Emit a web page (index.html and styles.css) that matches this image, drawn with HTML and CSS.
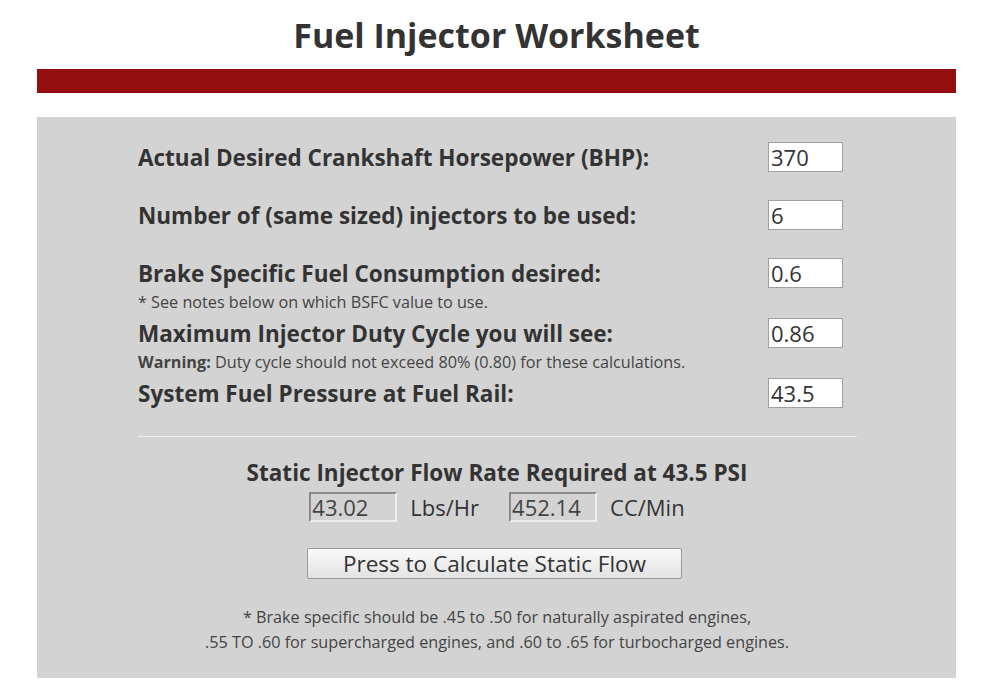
FILE: index.html
```html
<!DOCTYPE html>
<html>
<head>
<meta charset="utf-8">
<link rel="stylesheet" href="styles.css">
</head>
<body>
<div class="page">
  <h1 class="title">Fuel Injector Worksheet</h1>
  <div class="bar"></div>
  <div class="panel">
    <div class="form">
      <div class="row">
        <label class="label">Actual Desired Crankshaft Horsepower (BHP):</label>
        <input class="field" type="text" value="370">
      </div>
      <div class="row">
        <label class="label">Number of (same sized) injectors to be used:</label>
        <input class="field" type="text" value="6">
      </div>
      <div class="row row-noted">
        <label class="label">Brake Specific Fuel Consumption desired:</label>
        <input class="field" type="text" value="0.6">
      </div>
      <div class="note">* See notes below on which BSFC value to use.</div>
      <div class="row row-noted">
        <label class="label">Maximum Injector Duty Cycle you will see:</label>
        <input class="field" type="text" value="0.86">
      </div>
      <div class="note"><b>Warning:</b> Duty cycle should not exceed 80% (0.80) for these calculations.</div>
      <div class="row row-last">
        <label class="label">System Fuel Pressure at Fuel Rail:</label>
        <input class="field" type="text" value="43.5">
      </div>
      <hr class="divider">
      <div class="result">
        <div class="result-title">Static Injector Flow Rate Required at 43.5 PSI</div>
        <div class="outputs">
          <input class="out" type="text" value="43.02" readonly>
          <span class="unit">Lbs/Hr</span>
          <input class="out" type="text" value="452.14" readonly>
          <span class="unit">CC/Min</span>
        </div>
        <button class="calc" type="button">Press to Calculate Static Flow</button>
        <p class="foot">* Brake specific should be .45 to .50 for naturally aspirated engines,<br>.55 TO .60 for supercharged engines, and .60 to .65 for turbocharged engines.</p>
      </div>
    </div>
  </div>
</div>
</body>
</html>
```
FILE: styles.css
```css
html, body {
  margin: 0;
  padding: 0;
  background: #fff;
}
body {
  font-family: "Open Sans", "Noto Sans", sans-serif;
  color: #333;
}
.page {
  width: 919px;
  margin-left: 37px;
}
.title {
  margin: 0;
  padding-top: 12px;
  height: 69px;
  box-sizing: border-box;
  font-size: 34px;
  line-height: 46px;
  font-weight: 700;
  text-align: center;
  color: #333;
}
.bar {
  height: 24px;
  background: #930f0f;
}
.panel {
  margin-top: 24px;
  background: #d3d3d3;
  padding: 25px 0 23px;
}
.form {
  width: 719px;
  margin: 0 0 0 101px;
}
.row {
  display: flex;
  align-items: center;
  justify-content: space-between;
  height: 30px;
  padding-right: 14px;
  margin-bottom: 28px;
}
.row-noted {
  margin-bottom: 4px;
}
.row-last {
  margin-bottom: 0;
}
.label {
  font-size: 22.5px;
  font-weight: 700;
  color: #333;
  white-space: nowrap;
}
.field {
  width: 75px;
  height: 30px;
  box-sizing: border-box;
  border: 1px solid #a0a0a0;
  background: #fff;
  padding: 0 2px;
  font-family: "Open Sans", sans-serif;
  font-size: 22px;
  color: #333;
  outline: none;
}
.note {
  font-size: 16.2px;
  line-height: 20px;
  height: 26px;
  color: #444;
  white-space: nowrap;
}
.divider {
  border: 0;
  border-top: 1px solid #ececec;
  margin: 28px 0 0;
}
.result {
  text-align: center;
  padding-right: 1px;
}
.result-title {
  margin-top: 22px;
  font-size: 22.5px;
  line-height: 28px;
  font-weight: 700;
}
.outputs {
  display: flex;
  justify-content: center;
  align-items: center;
  margin-top: 5px;
  height: 30px;
}
.out {
  width: 88px;
  height: 30px;
  box-sizing: border-box;
  border-width: 2px;
  border-style: solid;
  border-top-color: #8a8a8a;
  border-left-color: #8a8a8a;
  border-right-color: #eeeeee;
  border-bottom-color: #eeeeee;
  background: #d3d3d3;
  padding: 0 1px;
  font-family: "Open Sans", sans-serif;
  font-size: 22px;
  color: #444;
  outline: none;
}
.unit {
  font-size: 22px;
  margin: 0 30px 0 13px;
  color: #333;
}
.unit:last-child {
  margin-right: 0;
}
.calc {
  display: block;
  margin: 26px 0 0 169px;
  width: 375px;
  height: 31px;
  border: 1px solid #999;
  border-radius: 2px;
  background: linear-gradient(#fafafa, #e2e2e2);
  font-family: "Open Sans", sans-serif;
  font-size: 22.5px;
  line-height: 29px;
  color: #333;
  padding: 0;
}
.foot {
  margin: 26px 0 0;
  font-size: 16.2px;
  line-height: 25px;
  color: #444;
  white-space: nowrap;
}
```
